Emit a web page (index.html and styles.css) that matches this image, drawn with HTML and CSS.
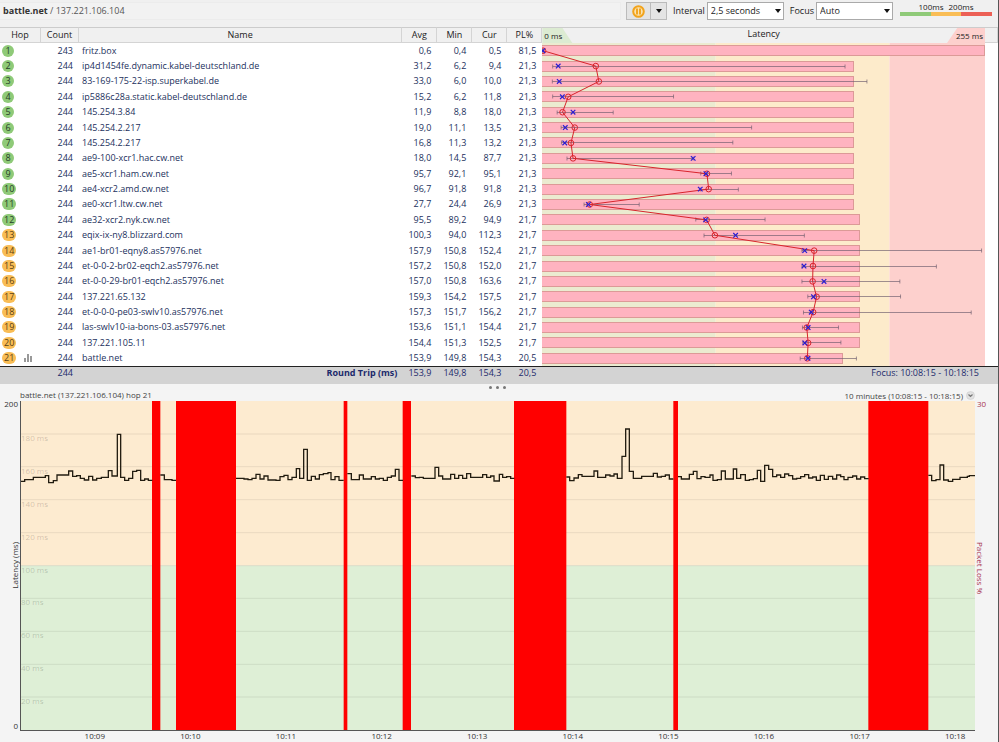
FILE: index.html
```html
<!DOCTYPE html>
<html lang="en">
<head>
    <meta charset="UTF-8">
    <meta name="viewport" content="width=device-width, initial-scale=1.0">
    <title>battle.net / 137.221.106.104</title>
    <link rel="stylesheet" href="styles.css">
</head>
<body>

<div class="app">
    <header class="toolbar">
        <h1 class="target"><b>battle.net</b> / 137.221.106.104</h1>
        <div class="split-button">
            <button class="pause" aria-label="Pause">
                <svg width="13" height="13" viewBox="0 0 13 13">
                    <circle cx="6.5" cy="6.5" r="5.3" fill="#fbe3b0" stroke="#f2a31b" stroke-width="2"/>
                    <path d="M5 3.4v6.2M8 3.4v6.2" stroke="#f2a31b" stroke-width="1.9"/>
                </svg>
            </button>
            <button class="more" aria-label="More"><span class="caret"></span></button>
        </div>
        <label for="interval">Interval</label>
        <div class="dropdown">
            <select id="interval">
                <option>2,5 seconds</option>
                <option>5 seconds</option>
            </select>
            <span class="caret"></span>
        </div>
        <label for="focus">Focus</label>
        <div class="dropdown">
            <select id="focus">
                <option>Auto</option>
                <option>10 minutes</option>
            </select>
            <span class="caret"></span>
        </div>
        <div class="legend">
            <div class="legend-labels"><span>100ms</span><span>200ms</span></div>
            <div class="legend-bar"><i class="good"></i><i class="warn"></i><i class="bad"></i></div>
        </div>
    </header>

    <table class="hops">
        <colgroup>
            <col class="col-hop"><col class="col-count"><col class="col-name">
            <col class="col-num"><col class="col-num"><col class="col-num"><col class="col-num">
            <col><col class="col-end">
        </colgroup>
        <thead>
            <tr>
                <th>Hop</th>
                <th>Count</th>
                <th>Name</th>
                <th>Avg</th>
                <th>Min</th>
                <th>Cur</th>
                <th>PL%</th>
                <th class="latency-head">
                    <div class="scale">
                        <span class="scale-min">0 ms</span>
                        <span>Latency</span>
                        <span class="scale-max">255 ms</span>
                    </div>
                </th>
                <th></th>
            </tr>
        </thead>
        <tbody id="hop-rows"></tbody>
        <tfoot>
            <tr>
                <td></td>
                <td class="num">244</td>
                <td class="total">Round Trip (ms)</td>
                <td class="num">153,9</td>
                <td class="num">149,8</td>
                <td class="num">154,3</td>
                <td class="num">20,5</td>
                <td class="focus-range" colspan="2">Focus: 10:08:15 - 10:18:15</td>
            </tr>
        </tfoot>
    </table>

    <div class="splitter"><i></i><i></i><i></i></div>

    <section class="timeline">
        <div class="timeline-head">
            <span>battle.net (137.221.106.104) hop 21</span>
            <span class="range">10 minutes (10:08:15 - 10:18:15)
                <svg width="9" height="9" viewBox="0 0 9 9">
                    <circle cx="4.5" cy="4.5" r="4" fill="#e2e2e2" stroke="#ccc" stroke-width=".6"/>
                    <path d="M2.5 3.5l2 2 2-2" fill="none" stroke="#777" stroke-width="1.2"/>
                </svg>
            </span>
        </div>

        <div class="axis-left">
            <span>200</span>
            <span class="axis-title">Latency (ms)</span>
            <span>0</span>
        </div>

        <div class="plot">
            <svg class="plot-svg" viewBox="0 0 2862 987" preserveAspectRatio="none">
                <rect width="2862" height="494" fill="#fdebd0"/>
                <rect y="494" width="2862" height="493" fill="#deefd6"/>
                <path class="grid" d="M0 99H2862M0 197H2862M0 296H2862M0 395H2862M0 494H2862M0 592H2862M0 691H2862M0 790H2862M0 888H2862"/>
                <!-- lost packets -->
                <g fill="#f00">
                    <rect x="393" width="25" height="987"/>
                    <rect x="465" width="180" height="987"/>
                    <rect x="968" width="11" height="987"/>
                    <rect x="1145" width="25" height="987"/>
                    <rect x="1479" width="157" height="987"/>
                    <rect x="1957" width="14" height="987"/>
                    <rect x="2542" width="180" height="987"/>
                </g>
                <!-- latency trace -->
                <g class="trace" transform="translate(-15 72)">
                    <path d="M14 169H26V164H52V157H88V152H98V173H112V167H123V150H158V138H170V154H182V152H193V160H205V165H218V154H230V165H242V160H256V157H277V137H288V153H304V28H314V157H326V166H338V160H350V139H362V136H374V166H386V162H397V166H409"/>
                    <path d="M433 150H445V164H468V166H480"/>
                    <path d="M660 160H684V162H696V164H708V160H720V148H732V162H744V153H756V165H780V166H792V155H804V151H816V164H828V157H841V131H851V160H863V73H874V166H886V154H898V162H910V149H922V146H936V143H945V164H957V155H969V166H983"/>
                    <path d="M994 146H1006V164H1030V150H1042V162H1066V155H1078V162H1090V160H1102V166H1114V157H1126V153H1138V133H1149V166H1161"/>
                    <path d="M1186 153H1198V158H1210V157H1222V160H1257V127H1268V153H1280V162H1304V148H1316V160H1328V151H1340V160H1352V146H1364V157H1400V149H1412V157H1424V153H1434V168H1450V148H1460V157H1472V155H1484V160H1495"/>
                </g>
                <g class="trace" transform="translate(1617 57)">
                    <path d="M19 171H29V182H42V174H55V164H66V169H102V153H113V172H137V165H150V168H162V162H172V175H186V109H197V27H208V154H220V175H245V169H280V160H292V171H304V169H316V165H328V177H340"/>
                    <path d="M354 170H364V177H388V163H400V154H411V176H423V170H435V172H450V165H459V181H472V179H484V153H496V177H520V147H530V175H542V164H556V181H568V179H580V176H592V151H602V184H614V136H626V148H638V170H650V165H662V172H674V162H686V167H698V177H710V175H722V170H734V164H746V174H758V171H769V181H781V166H793V178H805V169H818V177H830V165H842V170H852V179H864V172H878V168H890V177H902V171H914V176H926"/>
                    <path d="M1105 166H1115V182H1128V179H1140V135H1151V180H1165V184H1178V178H1200V172H1222V169H1228V167H1246"/>
                </g>
            </svg>
            <div class="grid-labels">
                <span></span><span>180 ms</span><span>160 ms</span><span>140 ms</span><span>120 ms</span>
                <span>100 ms</span><span>80 ms</span><span>60 ms</span><span>40 ms</span><span>20 ms</span>
            </div>
        </div>

        <div class="axis-right">
            <span>30</span>
            <span class="axis-title">Packet Loss %</span>
            <span></span>
        </div>

        <div class="axis-time">
            <span>10:09</span><span>10:10</span><span>10:11</span><span>10:12</span><span>10:13</span>
            <span>10:14</span><span>10:15</span><span>10:16</span><span>10:17</span><span>10:18</span>
        </div>
    </section>
</div>

<script src="script.js"></script>
</body>
</html>
```

FILE: styles.css
```css
* {
    box-sizing: border-box;
}

body {
    margin: 0;
    font-family: "Open Sans", "Noto Sans", sans-serif;
    font-size: 9px;
    line-height: 12px;
    color: #333;
    background: #f4f4f4;
}

.app {
    display: flex;
    flex-direction: column;
    min-height: 100vh;
    border-right: 1px solid #555;
    overflow: hidden;
}

/* toolbar */
.toolbar {
    display: flex;
    align-items: flex-start;
    height: 27px;
    padding: 2px 6px 0 0;
    background: #f0f0f0;
}

.target {
    flex: 1;
    margin: 0 5px 0 0;
    padding: 2px 3px;
    font-size: 9px;
    font-weight: normal;
    line-height: 12px;
    border: 1px solid #ececec;
    border-left: none;
    background: #f2f2f2;
    color: #555;
}

.target b {
    color: #333;
}

.toolbar label {
    padding: 3px 2px 0 6px;
    color: #222;
}

.split-button {
    display: flex;
    width: 41px;
    height: 18px;
    border: 1px solid #bbb;
    background: #e4e4e4;
}

.split-button button {
    display: flex;
    align-items: center;
    justify-content: center;
    padding: 0;
    border: none;
    background: none;
}

.split-button .pause {
    flex: 1;
}

.split-button .more {
    width: 16px;
    border-left: 1px solid #bbb;
}

.caret {
    border: 3px solid transparent;
    border-top: 4px solid #111;
    border-bottom: none;
}

.dropdown {
    position: relative;
}

.dropdown select {
    appearance: none;
    display: block;
    width: 77px;
    height: 18px;
    padding: 0 3px;
    border: 1px solid #aaa;
    border-radius: 0;
    background: #fff;
    color: #222;
    font: inherit;
}

.dropdown .caret {
    position: absolute;
    top: 7px;
    right: 3px;
    pointer-events: none;
}

.legend {
    width: 92px;
    margin-left: 7px;
    font-size: 8px;
    line-height: 10px;
}

.legend-labels {
    display: grid;
    grid-template-columns: 1fr 1fr;
    padding: 0 16px;
    text-align: center;
    color: #222;
}

.legend-bar {
    display: flex;
    height: 4px;
}

.legend-bar i {
    flex: 1;
}

.good { background: #8fca78; }
.warn { background: #f9bd55; }
.bad { background: #ec6055; }

/* hop table */
.hops {
    width: 100%;
    table-layout: fixed;
    border-collapse: separate;
    border-spacing: 0;
    background: #fff;
    color: #22305c;
}

.col-hop { width: 41px; }
.col-count { width: 38px; }
.col-name { width: 32.4%; }
.col-num { width: 35px; }
.col-end { width: 13px; }

.hops th,
.hops td {
    padding: 0;
}

.hops th {
    height: 16px;
    font-weight: normal;
    line-height: 14px;
    color: #222;
    background: #f0f0f0;
    border-top: 1px solid #ccc;
    border-right: 1px solid #d4d4d4;
    border-bottom: 1px solid #d4d4d4;
}

.hops .latency-head {
    border-right: none;
    border-bottom: none;
}

.scale {
    display: flex;
    justify-content: space-between;
    height: 15px;
    line-height: 12px;
}

.scale-min,
.scale-max {
    width: 38px;
    font-size: 8px;
    line-height: 15px;
}

.scale-min {
    padding-left: 2px;
    text-align: left;
    background: #dcebd2;
    clip-path: polygon(0 0, 53% 0, 79% 100%, 0 100%);
}

.scale-max {
    padding-right: 2px;
    text-align: right;
    background: #fdd0cd;
    clip-path: polygon(27% 0, 100% 0, 100% 100%, 0 100%);
}

.hops tbody td {
    height: 15px;
    line-height: 12px;
}

.hops .num {
    padding-right: 6px;
    text-align: right;
}

.hops .name {
    padding-left: 3px;
    white-space: nowrap;
    overflow: hidden;
}

.hop-cell {
    display: flex;
    align-items: center;
    justify-content: space-between;
    padding: 0 8px 0 2px;
}

.badge {
    min-width: 12px;
    padding: 0 2px;
    border-radius: 6px;
    text-align: center;
    color: #26402a;
}

.badge.warn {
    color: #5a4215;
}

.graph-cell {
    vertical-align: top;
}

.graph {
    display: block;
    width: 100%;
    height: 323px;
}

.loss-bar {
    fill: #ffb3c0;
    stroke: #dc9a97;
}

.whisker {
    fill: none;
    stroke: #6b5a6b;
    stroke-opacity: .65;
}

.avg-line,
.avg-dot {
    fill: none;
    stroke: #d8242c;
}

.cur-mark {
    fill: none;
    stroke: #2a1fd0;
    stroke-width: 1.2;
}

.hops tfoot td {
    height: 18px;
    padding-bottom: 5px;
    line-height: 12px;
    background: #d3d3d3;
    border-top: 1px solid #222;
    color: #1c2a6b;
}

.hops tfoot .total {
    padding-right: 5px;
    text-align: right;
    font-weight: bold;
}

.hops tfoot .focus-range {
    padding-right: 19px;
    text-align: right;
}

.splitter {
    display: flex;
    justify-content: center;
    gap: 4px;
    height: 5px;
    padding: 2px 3px 0 0;
}

.splitter i {
    width: 3px;
    height: 3px;
    border-radius: 50%;
    background: #777;
}

/* timeline graph */
.timeline {
    flex: 1;
    display: grid;
    grid-template-columns: 20px 1fr 23px;
    grid-template-rows: 12px minmax(200px, 1fr) 11px;
}

.timeline-head {
    grid-column: 2;
    display: flex;
    justify-content: space-between;
    font-size: 8px;
    line-height: 11px;
    color: #444;
}

.range {
    display: flex;
    align-items: center;
    gap: 3px;
}

.axis-left,
.axis-right {
    display: flex;
    flex-direction: column;
    justify-content: space-between;
    padding-bottom: 2px;
    font-size: 8px;
    line-height: 6px;
}

.axis-left {
    grid-column: 1;
    align-items: flex-end;
    padding-right: 2px;
}

.axis-right {
    grid-column: 3;
    align-items: flex-start;
    padding-left: 2px;
    color: #a8324e;
}

.axis-title {
    writing-mode: vertical-rl;
}

.axis-left .axis-title {
    transform: rotate(180deg);
}

.plot {
    position: relative;
    border-left: 1px solid #555;
    border-bottom: 1px solid #555;
}

.plot-svg {
    position: absolute;
    width: 100%;
    height: 100%;
}

.grid {
    stroke: #000;
    stroke-opacity: .08;
    vector-effect: non-scaling-stroke;
}

.trace path {
    fill: none;
    stroke: #221c10;
    stroke-width: 1.3;
    vector-effect: non-scaling-stroke;
}

.grid-labels {
    position: absolute;
    inset: 0;
    display: grid;
    grid-template-rows: repeat(10, 1fr);
    font-size: 8px;
    line-height: 8px;
    color: rgba(0, 0, 0, .2);
}

.axis-time {
    grid-column: 2;
    display: grid;
    grid-template-columns: repeat(10, 1fr);
    margin: 0 -28px 0 27px;
    font-size: 8px;
    line-height: 9px;
    text-align: center;
}
```

FILE: script.js
```js
// hop, count, name, avg, min, cur, loss, max
const hops = [
    [1, 243, "fritz.box", 0.6, 0.4, 0.5, 81.5, 0.8],
    [2, 244, "ip4d1454fe.dynamic.kabel-deutschland.de", 31.2, 6.2, 9.4, 21.3, 175.8],
    [3, 244, "83-169-175-22-isp.superkabel.de", 33.0, 6.0, 10.0, 21.3, 188.5],
    [4, 244, "ip5886c28a.static.kabel-deutschland.de", 15.2, 6.2, 11.8, 21.3, 76.3],
    [5, 244, "145.254.3.84", 11.9, 8.8, 18.0, 21.3, 41.3],
    [6, 244, "145.254.2.217", 19.0, 11.1, 13.5, 21.3, 121.6],
    [7, 244, "145.254.2.217", 16.8, 11.3, 13.2, 21.3, 110.7],
    [8, 244, "ae9-100-xcr1.hac.cw.net", 18.0, 14.5, 87.7, 21.3, 87.7],
    [9, 244, "ae5-xcr1.ham.cw.net", 95.7, 92.1, 95.1, 21.3, 109.9],
    [10, 244, "ae4-xcr2.amd.cw.net", 96.7, 91.8, 91.8, 21.3, 113.9],
    [11, 244, "ae0-xcr1.ltw.cw.net", 27.7, 24.4, 26.9, 21.3, 56.4],
    [12, 244, "ae32-xcr2.nyk.cw.net", 95.5, 89.2, 94.9, 21.7, 129.4],
    [13, 244, "eqix-ix-ny8.blizzard.com", 100.3, 94.0, 112.3, 21.7, 152.2],
    [14, 244, "ae1-br01-eqny8.as57976.net", 157.9, 150.8, 152.4, 21.7, 255],
    [15, 244, "et-0-0-2-br02-eqch2.as57976.net", 157.2, 150.8, 152.0, 21.7, 228.8],
    [16, 244, "et-0-0-29-br01-eqch2.as57976.net", 157.0, 150.8, 163.6, 21.7, 207.6],
    [17, 244, "137.221.65.132", 159.3, 154.2, 157.5, 21.7, 208],
    [18, 244, "et-0-0-0-pe03-swlv10.as57976.net", 157.3, 151.7, 156.2, 21.7, 249],
    [19, 244, "las-swlv10-ia-bons-03.as57976.net", 153.6, 151.1, 154.4, 21.7, 172],
    [20, 244, "137.221.105.11", 154.4, 151.3, 152.5, 21.7, 173.4],
    [21, 244, "battle.net", 153.9, 149.8, 154.3, 20.5, 182.4]
];

const MAX_MS = 255;
const MARK_MS = 257; // keeps the last marker inside the graph
const MAX_LOSS = 30.2;

const fmt = n => n.toFixed(1).replace(".", ",");

const chartIcon = `<svg width="9" height="8" viewBox="0 0 9 8" fill="#999">
    <rect y="4" width="2" height="4"/><rect x="3" y="0" width="2" height="8"/><rect x="6" y="2" width="2" height="6"/></svg>`;

function renderRows() {
    document.getElementById("hop-rows").innerHTML = hops.map((h, i) => {
        const [hop, count, name, avg, min, cur, loss] = h;
        return `<tr>
            <td><div class="hop-cell"><span class="badge ${hop > 12 ? "warn" : "good"}">${hop}</span>${hop === 21 ? chartIcon : ""}</div></td>
            <td class="num">${count}</td>
            <td class="name">${name}</td>
            <td class="num">${fmt(avg)}</td>
            <td class="num">${fmt(min)}</td>
            <td class="num">${fmt(cur)}</td>
            <td class="num">${fmt(loss)}</td>
            ${i === 0 ? `<td class="graph-cell" rowspan="${hops.length}"><svg class="graph" id="graph"></svg></td><td rowspan="${hops.length}"></td>` : ""}
        </tr>`;
    }).join("");
}

function drawGraph() {
    const svg = document.getElementById("graph");
    const w = svg.clientWidth;
    const h = svg.clientHeight;
    const rowH = h / hops.length;
    const band = ms => ms / MAX_MS * w;
    const x = ms => ms / MARK_MS * w;
    const y = i => rowH * (i + 0.5);

    let out = `<rect width="${band(100)}" height="${h}" fill="#ebebd0"/>
        <rect x="${band(100)}" width="${band(100)}" height="${h}" fill="#fdebcb"/>
        <rect x="${band(200)}" width="${band(55)}" height="${h}" fill="#fdd0cd"/>`;

    hops.forEach((d, i) => {
        const bar = Math.round(Math.min(d[6] / MAX_LOSS, 1) * w);
        out += `<rect class="loss-bar" x="-.5" y="${Math.round(y(i) - 5.5) + 0.5}" width="${bar}" height="10"/>`;
    });

    hops.forEach((d, i) => {
        const cy = Math.round(y(i) - 0.5) + 0.5;
        out += `<path class="whisker" d="M${x(d[4])} ${cy - 2}v4m0 -2H${x(d[7])}m0 -2v4"/>`;
    });

    out += `<polyline class="avg-line" points="${hops.map((d, i) => x(d[3]) + "," + y(i)).join(" ")}"/>`;

    hops.forEach((d, i) => {
        out += `<circle class="avg-dot" cx="${x(d[3])}" cy="${y(i)}" r="2.8"/>
            <path class="cur-mark" d="M${x(d[5]) - 2.3} ${y(i) - 2.3}l4.6 4.6m0 -4.6l-4.6 4.6"/>`;
    });

    svg.innerHTML = out;
}

renderRows();
drawGraph();
window.addEventListener("resize", drawGraph);
```
